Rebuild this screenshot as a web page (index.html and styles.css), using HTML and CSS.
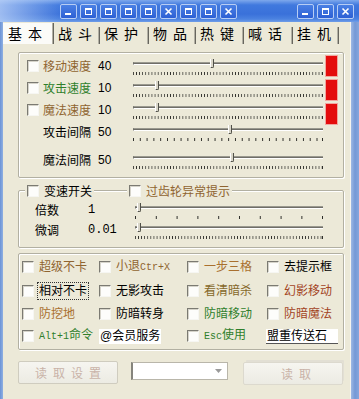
FILE: index.html
```html
<!DOCTYPE html>
<html>
<head>
<meta charset="utf-8">
<link rel="stylesheet" href="styles.css">
</head>
<body>
<div class="window">
  <div class="titlebar">
    <div class="tb-group">
      <span class="tbtn"><svg width="9" height="9" viewBox="0 0 9 9"><rect x="1" y="6" width="6" height="2" fill="#fff"/></svg></span>
      <span class="tbtn"><svg width="9" height="9" viewBox="0 0 9 9"><rect x="1.5" y="1.5" width="6" height="6" fill="none" stroke="#fff" stroke-width="1"/><rect x="1" y="1" width="7" height="2" fill="#fff"/></svg></span>
      <span class="tbtn"><svg width="9" height="9" viewBox="0 0 9 9"><rect x="1.5" y="1.5" width="6" height="6" fill="none" stroke="#fff" stroke-width="1"/><rect x="1" y="1" width="7" height="2" fill="#fff"/></svg></span>
      <span class="tbtn"><svg width="9" height="9" viewBox="0 0 9 9"><rect x="1.5" y="1.5" width="6" height="6" fill="none" stroke="#fff" stroke-width="1"/><rect x="1" y="1" width="7" height="2" fill="#fff"/></svg></span>
      <span class="tbtn"><svg width="9" height="9" viewBox="0 0 9 9"><rect x="1.5" y="1.5" width="6" height="6" fill="none" stroke="#fff" stroke-width="1"/><rect x="1" y="1" width="7" height="2" fill="#fff"/></svg></span>
      <span class="tbtn"><svg width="9" height="9" viewBox="0 0 9 9"><path d="M1.5 1.5 L7.5 7.5 M7.5 1.5 L1.5 7.5" stroke="#fff" stroke-width="1.6"/></svg></span>
      <span class="tbtn"><svg width="9" height="9" viewBox="0 0 9 9"><rect x="1.5" y="1.5" width="6" height="6" fill="none" stroke="#fff" stroke-width="1"/><rect x="1" y="1" width="7" height="2" fill="#fff"/></svg></span>
      <span class="tbtn"><svg width="9" height="9" viewBox="0 0 9 9"><rect x="1.5" y="1.5" width="6" height="6" fill="none" stroke="#fff" stroke-width="1"/><rect x="1" y="1" width="7" height="2" fill="#fff"/></svg></span>
      <span class="tbtn"><svg width="9" height="9" viewBox="0 0 9 9"><path d="M1.5 1.5 L7.5 7.5 M7.5 1.5 L1.5 7.5" stroke="#fff" stroke-width="1.6"/></svg></span>
    </div>
    <div class="tb-group tb-right">
      <span class="tbtn"><svg width="9" height="9" viewBox="0 0 9 9"><rect x="1" y="6" width="6" height="2" fill="#fff"/></svg></span>
      <span class="tbtn"><svg width="9" height="9" viewBox="0 0 9 9"><rect x="1.5" y="1.5" width="6" height="6" fill="none" stroke="#fff" stroke-width="1"/><rect x="1" y="1" width="7" height="2" fill="#fff"/></svg></span>
      <span class="tbtn"><svg width="9" height="9" viewBox="0 0 9 9"><path d="M1.5 1.5 L7.5 7.5 M7.5 1.5 L1.5 7.5" stroke="#fff" stroke-width="1.6"/></svg></span>
    </div>
  </div>
  <div class="body">
    <div class="lband"></div>
    <div class="main">
      <div class="tabs">
        <span class="tab sel w1">基本</span>
        <span class="tab w2">战斗</span>
        <span class="tab w3">保护</span>
        <span class="tab w4">物品</span>
        <span class="tab w5">热键</span>
        <span class="tab w6">喊话</span>
        <span class="tab w7">挂机</span>
      </div>
      <div class="page">
        <div class="group g1">
          <div class="rows">
            <div class="srow">
              <span class="cbslot"><span class="cb"></span></span>
              <span class="lbl brown">移动速度</span>
              <span class="val">40</span>
              <div class="slider"><div class="track"></div><div class="ticks dense"></div><span class="thumb" style="left:77px"></span></div>
            </div>
            <div class="srow">
              <span class="cbslot"><span class="cb"></span></span>
              <span class="lbl green">攻击速度</span>
              <span class="val">10</span>
              <div class="slider"><div class="track"></div><div class="ticks dense"></div><span class="thumb" style="left:22px"></span></div>
            </div>
            <div class="srow">
              <span class="cbslot"><span class="cb"></span></span>
              <span class="lbl brown">魔法速度</span>
              <span class="val">10</span>
              <div class="slider"><div class="track"></div><div class="ticks dense"></div><span class="thumb" style="left:22px"></span></div>
            </div>
            <div class="srow">
              <span class="cbslot"></span>
              <span class="lbl">攻击间隔</span>
              <span class="val">50</span>
              <div class="slider"><div class="track"></div><div class="ticks medium"></div><span class="thumb" style="left:95px"></span></div>
            </div>
            <div class="srow row5">
              <span class="cbslot"></span>
              <span class="lbl">魔法间隔</span>
              <span class="val">50</span>
              <div class="slider"><div class="track"></div><div class="ticks dense"></div><span class="thumb" style="left:97px"></span></div>
            </div>
          </div>
          <div class="leds">
            <span class="led"></span>
            <span class="led"></span>
            <span class="led"></span>
          </div>
        </div>

        <div class="group g2">
          <div class="legend">
            <span class="lg lg1"><span class="cb"></span><span>变速开关</span></span>
            <span class="lg lg2"><span class="cb"></span><span class="brown">过齿轮异常提示</span></span>
          </div>
          <div class="srow2">
            <span class="lbl2">倍数</span>
            <span class="val2 mono">1</span>
            <div class="slider s2"><div class="track"></div><div class="ticks sparse"></div><span class="thumb" style="left:2px"></span></div>
          </div>
          <div class="srow2">
            <span class="lbl2">微调</span>
            <span class="val2 mono">0.01</span>
            <div class="slider s2"><div class="track"></div><div class="ticks dense"></div><span class="thumb" style="left:2px"></span></div>
          </div>
        </div>

        <div class="group g3">
          <div class="opt"><span class="cb"></span><span class="brown">超级不卡</span></div>
          <div class="opt"><span class="cb"></span><span class="brown">小退<span class="mono10">Ctr+X</span></span></div>
          <div class="opt"><span class="cb"></span><span class="orange">一步三格</span></div>
          <div class="opt"><span class="cb"></span><span>去提示框</span></div>

          <div class="opt"><span class="cb"></span><span class="focus">相对不卡</span></div>
          <div class="opt"><span class="cb"></span><span>无影攻击</span></div>
          <div class="opt"><span class="cb"></span><span class="olive">看清暗杀</span></div>
          <div class="opt"><span class="cb"></span><span class="red">幻影移动</span></div>

          <div class="opt"><span class="cb"></span><span class="orange">防挖地</span></div>
          <div class="opt"><span class="cb"></span><span>防暗转身</span></div>
          <div class="opt"><span class="cb"></span><span class="green">防暗移动</span></div>
          <div class="opt"><span class="cb"></span><span class="red">防暗魔法</span></div>

          <div class="opt"><span class="cb"></span><span class="green"><span class="mono10">Alt+1</span>命令</span></div>
          <div class="opt"><span class="field f1">@会员服务</span></div>
          <div class="opt"><span class="cb"></span><span class="green"><span class="mono10">Esc</span>使用</span></div>
          <div class="opt"><span class="field f2">盟重传送石</span></div>
        </div>

        <div class="bottom">
          <span class="btn b1">读取设置</span>
          <span class="combo"><svg width="7" height="4" viewBox="0 0 7 4"><path d="M0 0 H7 L3.5 4 Z" fill="#9a9a9a"/></svg></span>
          <span class="btn b2">读取</span>
        </div>
      </div>
    </div>
    <div class="rband"></div>
  </div>
</div>
</body>
</html>
```

FILE: styles.css
```css
html, body {
  margin: 0;
  padding: 0;
}
body {
  width: 359px;
  height: 399px;
  overflow: hidden;
  background: #ECE9D8;
  font-family: "Liberation Sans", "Noto Sans CJK SC", sans-serif;
  font-size: 12px;
  line-height: 14px;
  color: #000;
}
.window {
  display: flex;
  flex-direction: column;
  height: 399px;
}

/* title bar */
.titlebar {
  flex: none;
  height: 22px;
  box-sizing: border-box;
  padding: 4px 5px 0 60px;
  display: flex;
  align-items: flex-start;
  background:
    linear-gradient(to right, rgba(190, 212, 248, 0.75) 0, rgba(190, 212, 248, 0) 62px),
    linear-gradient(to bottom, #7ea8ec 0, #4079de 5px, #3a71da 14px, #4b82e0 19px, #6f9de8 22px);
}
.tb-group {
  display: flex;
  gap: 3px;
}
.tb-right {
  margin-left: auto;
}
.tbtn {
  width: 17px;
  height: 15px;
  box-sizing: border-box;
  border: 1px solid #b7cdf4;
  border-radius: 2px;
  background: linear-gradient(to bottom, #4a80e4, #2d60d4);
  display: flex;
  align-items: center;
  justify-content: center;
}

/* body frame */
.body {
  flex: 1;
  display: flex;
  min-height: 0;
}
.lband {
  width: 3px;
  flex: none;
  background: linear-gradient(to right, #6b93d6, #8fb0e2);
}
.rband {
  width: 9px;
  flex: none;
  background: linear-gradient(to right, #f4f3ee 0, #f4f3ee 1px, #9db8e4 1px, #7498d6 5px, #86a6dc 9px);
}
.main {
  width: 347px;
  flex: none;
  display: flex;
  flex-direction: column;
}

/* tabs */
.tabs {
  flex: none;
  height: 22px;
  display: flex;
  align-items: flex-start;
}
.tab {
  margin-top: 5px;
  height: 17px;
  box-sizing: border-box;
  border-right: 1px solid #67665e;
  box-shadow: inset -1px 0 0 #b2b0a4;
  padding-left: 4px;
  font-family: "Noto Sans CJK SC", sans-serif;
  font-size: 14px;
  line-height: 12px;
  letter-spacing: 6px;
  white-space: nowrap;
  color: #000;
}
.tab.sel {
  margin-top: 1px;
  height: 21px;
  padding-top: 4px;
  padding-left: 5px;
  background: #fbfbf8;
}
.w1 { width: 51px; }
.w2 { width: 46px; }
.w3 { width: 49px; }
.w4 { width: 47px; }
.w5 { width: 48px; }
.w6 { width: 49px; }
.w7 { width: 46px; }

/* page */
.page {
  flex: 1;
  display: flex;
  flex-direction: column;
  padding-left: 15px;
}
.group {
  box-sizing: border-box;
  width: 326px;
  border: 1px solid #b2b0a2;
  box-shadow: inset 1px 1px 0 #fff, 1px 1px 0 #fff;
  border-radius: 2px;
}

/* group 1 */
.g1 {
  margin-top: 8px;
  height: 126px;
  display: flex;
  align-items: flex-start;
  padding: 2px 0 0 8px;
}
.rows {
  display: flex;
  flex-direction: column;
}
.srow {
  height: 22px;
  display: flex;
  align-items: center;
}
.row5 {
  margin-top: 6px;
}
.cbslot {
  width: 16px;
  flex: none;
  display: flex;
  align-items: center;
}
.lbl {
  width: 55px;
  flex: none;
  font-family: "Noto Sans CJK SC", sans-serif;
}
.val {
  width: 35px;
  flex: none;
}
.leds {
  margin: 1px 0 0 3px;
  display: flex;
  flex-direction: column;
  gap: 4px;
}
.led {
  width: 11px;
  height: 20px;
  background: #e40c0c;
  box-shadow: 0 0 0 1px #f0a6a0;
}

/* checkbox */
.cb {
  flex: none;
  width: 12px;
  height: 12px;
  box-sizing: border-box;
  border: 1px solid;
  border-color: #7b7a72 #f6f6f2 #f6f6f2 #7b7a72;
  box-shadow: inset 1px 1px 0 #d6d4ca;
  background: #fdfdfb;
}

/* slider */
.slider {
  position: relative;
  flex: none;
  width: 190px;
  height: 20px;
}
.slider.s2 {
  width: 188px;
}
.track {
  margin-top: 6px;
  height: 1px;
  background: #6f6e68;
  border-top: 1px solid #9a998f;
  border-bottom: 1px solid #fff;
  border-left: 1px solid #6f6e68;
}
.ticks {
  margin-top: 7px;
  height: 3px;
  background-repeat: repeat-x;
  background-image: linear-gradient(to right, #2e2e2a 1px, transparent 1px);
  border-right: 1px solid #2e2e2a;
}
.ticks.dense { background-size: 3.1px 100%; }
.ticks.medium { background-size: 6.8px 100%; }
.ticks.sparse { background-size: 20.8px 100%; }
.thumb {
  position: absolute;
  top: 3px;
  width: 2px;
  height: 8px;
  border-left: 1px solid #fff;
  border-right: 1px solid #505048;
  border-bottom: 1px solid #505048;
  background: #d8d5c8;
  border-bottom-right-radius: 2px;
}

/* group 2 */
.g2 {
  margin-top: 12px;
  height: 58px;
  padding-left: 16px;
}
.legend {
  margin: -7px 0 0 -16px;
  height: 13px;
  display: flex;
  align-items: center;
}
.lg {
  display: flex;
  align-items: center;
  gap: 5px;
  padding: 0 2px;
  background: #ECE9D8;
  font-family: "Noto Sans CJK SC", sans-serif;
}
.lg1 {
  margin-left: 6px;
}
.lg2 {
  margin-left: 33px;
}
.srow2 {
  height: 20px;
  display: flex;
  align-items: center;
}
.legend + .srow2 {
  margin-top: 3px;
}
.lbl2 {
  width: 53px;
  flex: none;
  font-family: "Noto Sans CJK SC", sans-serif;
}
.val2 {
  width: 47px;
  flex: none;
}
.mono {
  font-family: "Liberation Mono", monospace;
  font-size: 12px;
}
.mono10 {
  font-family: "Liberation Mono", monospace;
  font-size: 10px;
}

/* group 3 */
.g3 {
  margin-top: 5px;
  height: 97px;
  padding: 1px 0 0 3px;
  display: grid;
  grid-template-columns: 77px 88px 80px 1fr;
  grid-template-rows: 24px 24px 21px 24px;
  align-items: center;
}
.opt {
  display: flex;
  align-items: center;
  gap: 5px;
  white-space: nowrap;
  font-family: "Liberation Sans", "Noto Sans CJK SC", sans-serif;
}
.focus {
  outline: 1px dotted #333;
  outline-offset: 1px;
}
.field {
  height: 15px;
  background: #fff;
  line-height: 15px;
  padding-left: 1px;
  box-sizing: border-box;
}
.f1 {
  width: 62px;
}
.f2 {
  width: 72px;
  margin-left: -1px;
  border-bottom: 1px solid #555;
}

/* colours */
.brown { color: #8f6430; }
.green { color: #2f7f2c; }
.orange { color: #a9702f; }
.olive { color: #86682a; }
.red { color: #a3441f; }

/* bottom */
.bottom {
  margin-top: 11px;
  display: flex;
  align-items: flex-start;
}
.btn {
  box-sizing: border-box;
  width: 100px;
  height: 23px;
  border: 1px solid #cfccbf;
  border-radius: 2px;
  background: linear-gradient(to bottom, #f6f5f0, #ecebe3);
  color: #c9b3a8;
  font-family: "Noto Sans CJK SC", sans-serif;
  font-size: 12px;
  line-height: 21px;
  letter-spacing: 6px;
  display: flex;
  justify-content: center;
  padding-left: 6px;
}
.b2 {
  margin-top: 1px;
  margin-left: 15px;
  border-color: #dcd9ce;
  padding-left: 12px;
  box-shadow: 2px -3px 0 -1px #e2dfd4;
}
.combo {
  box-sizing: border-box;
  margin: 1px 0 0 13px;
  width: 97px;
  height: 18px;
  background: #fff;
  border: 1px solid #b9b6aa;
  border-left: 2px solid #85847c;
  display: flex;
  align-items: center;
  justify-content: flex-end;
  padding-right: 5px;
}
```
